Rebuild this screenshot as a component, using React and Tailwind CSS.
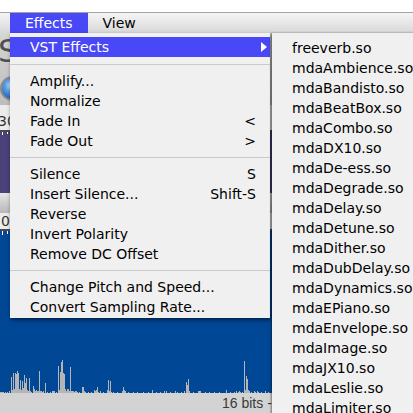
import React from "react";

const peaks = [
  [0, 1], [1, 1], [2, 1], [3, 1], [5, 1], [7, 1], [9, 2], [11, 16], [12, 3], [13, 20], [14, 4], [15, 20], [16, 19], [17, 22], [18, 20],
  [19, 4], [20, 13], [21, 3], [22, 12], [23, 5], [24, 18], [25, 10], [26, 15], [27, 3], [28, 2], [29, 15], [30, 2], [31, 1],
  [33, 7], [34, 4], [35, 2], [36, 3], [37, 2], [38, 2], [39, 22], [40, 2], [41, 2], [42, 1], [43, 2], [45, 10], [47, 1], [50, 1],
  [52, 2], [53, 2], [54, 2], [56, 1], [58, 27], [59, 3], [60, 21], [61, 31], [62, 33], [63, 20], [64, 19], [65, 4], [66, 2],
  [67, 4], [68, 4], [69, 2], [70, 26], [71, 2], [72, 2], [73, 2], [74, 1], [75, 2], [76, 2], [77, 1], [79, 1], [82, 6], [83, 6],
  [84, 2], [85, 1], [88, 1], [91, 1], [94, 3], [95, 2], [96, 3], [97, 6], [98, 1], [100, 2], [103, 1], [107, 3], [108, 13],
  [109, 2], [110, 12], [111, 1], [113, 1], [117, 1], [122, 2], [123, 6], [124, 3], [125, 2], [128, 1], [133, 1], [137, 1],
  [143, 1], [148, 1], [152, 3], [156, 1], [160, 1], [164, 2], [166, 2], [170, 1], [175, 2], [177, 1], [181, 1], [184, 2],
  [186, 11], [187, 8], [188, 14], [189, 2], [193, 1], [198, 2], [199, 2], [200, 2], [205, 1], [209, 1], [214, 1], [219, 1],
  [226, 3], [230, 1], [234, 1], [236, 2], [238, 1], [239, 2], [240, 1], [242, 1], [244, 32], [245, 3], [246, 17], [247, 14],
  [248, 3], [249, 2], [251, 1], [254, 2], [255, 1], [257, 2], [258, 1], [261, 1], [265, 2], [268, 1],
];

const subItems = [
  "freeverb.so", "mdaAmbience.so", "mdaBandisto.so", "mdaBeatBox.so", "mdaCombo.so", "mdaDX10.so", "mdaDe-ess.so",
  "mdaDegrade.so", "mdaDelay.so", "mdaDetune.so", "mdaDither.so", "mdaDubDelay.so", "mdaDynamics.so", "mdaEPiano.so",
  "mdaEnvelope.so", "mdaImage.so", "mdaJX10.so", "mdaLeslie.so", "mdaLimiter.so",
];

function Item({ label, shortcut }) {
  return (
    <div className="h-[20px] flex items-center justify-between pl-[20px] pr-[14px] text-black">
      <span>{label}</span>
      {shortcut ? <span>{shortcut}</span> : null}
    </div>
  );
}

function Sep({ h }) {
  return (
    <div className={h === 14 ? "h-[14px] pt-[7px]" : "h-[13px] pt-[6px]"}>
      <div className="h-px bg-[#cacaca]" />
    </div>
  );
}

export default function App() {
  return (
    <div className="relative w-[413px] h-[413px] overflow-hidden bg-white font-['DejaVu_Sans',sans-serif] text-[14px] leading-[20px]">
      <div className="h-[12px] bg-white" />
      <div className="h-px bg-[#a4a4a4]" />
      {/* menubar */}
      <div className="h-[20px] flex pl-[10px] bg-gradient-to-b from-[#f5f5f5] to-[#d8d8d8] border-b border-[#c0c0c0] box-content -mb-px">
        <div className="px-[15px] bg-[#4848f6] text-white leading-[20px]">Effects</div>
        <div className="px-[15px] text-black leading-[20px]">View</div>
      </div>
      {/* background app */}
      <div className="h-[72px] bg-gradient-to-b from-[#d6d6d6] to-[#bdbdbd] relative">
        <div className="absolute left-[-2px] top-[-2px] text-[32px] leading-[40px] text-[#505050]">S</div>
        <div className="absolute left-[0px] top-[43px] w-[25px] h-[25px] rounded-full border-[2px] border-[#8a8a8a] bg-[radial-gradient(circle_at_45%_35%,#d8ecff_0%,#5aa0e8_35%,#1b5fb5_80%)]" />
      </div>
      <div className="h-[27px] bg-[#ececec] border-b-2 border-[#4a4a4a] box-border flex items-end pb-[1px]">
        <span className="text-[14px] leading-[16px] text-[#333] ml-[-2px]">30</span>
      </div>
      <div className="h-[61px] bg-[#4a4279] relative">
        <div className="absolute left-[2px] top-0 w-px h-[3px] bg-white" />
        <div className="absolute left-[7px] top-0 w-px h-[2px] bg-white" />
      </div>
      <div className="h-[20px] bg-gradient-to-b from-[#e6e6e6] to-[#b8b8b8]" />
      <div className="h-[18px] bg-[#ececec] border-b-2 border-[#4a4a4a] box-border flex items-end">
        <span className="text-[14px] leading-[16px] text-[#333] ml-[1px]">0</span>
      </div>
      <div className="h-[162px] bg-[#004796] relative">
        <div className="absolute left-[2px] top-0 w-px h-[4px] bg-white" />
        <div className="absolute left-[7px] top-0 w-px h-[3px] bg-white" />
        <svg className="absolute left-0 bottom-0" width="270" height="40" viewBox="0 0 270 40">
          {peaks.map(([x, h], i) => (
            <rect key={i} x={x} y={40 - h} width="1" height={h} fill="#b5b5b5" />
          ))}
        </svg>
      </div>
      <div className="h-[20px] bg-[#d3d3d3] flex items-center pl-[222px] text-[#3a3a3a] whitespace-nowrap font-['Liberation_Sans',sans-serif] text-[14px]">
        <span>16 bits -</span>
      </div>

      {/* Effects menu */}
      <div className="absolute left-[10px] top-[33px] w-[260px] bg-[#f0f0f0] pt-[4px] pb-[1px] shadow-[1px_2px_4px_rgba(0,0,0,0.55)]">
        <div className="h-[20px] flex items-center justify-between pl-[20px] pr-[3px] bg-[#4848f6] text-white">
          <span>VST Effects</span>
          <svg width="6" height="10" viewBox="0 0 6 10">
            <polygon points="0,0 6,5 0,10" fill="white" />
          </svg>
        </div>
        <Sep h={14} />
        <Item label="Amplify..." />
        <Item label="Normalize" />
        <Item label="Fade In" shortcut="<" />
        <Item label="Fade Out" shortcut=">" />
        <Sep h={13} />
        <Item label="Silence" shortcut="S" />
        <Item label="Insert Silence..." shortcut="Shift-S" />
        <Item label="Reverse" />
        <Item label="Invert Polarity" />
        <Item label="Remove DC Offset" />
        <Sep h={13} />
        <Item label="Change Pitch and Speed..." />
        <Item label="Convert Sampling Rate..." />
      </div>

      {/* VST submenu */}
      <div className="absolute left-[272px] top-[33px] w-[160px] h-[400px] bg-[#f0f0f0] pt-[5px] pl-[20px] shadow-[-1px_0_2px_rgba(0,0,0,0.45)]">
        {subItems.map((s) => (
          <div key={s} className="h-[20px] flex items-center text-black whitespace-nowrap">{s}</div>
        ))}
      </div>
    </div>
  );
}
